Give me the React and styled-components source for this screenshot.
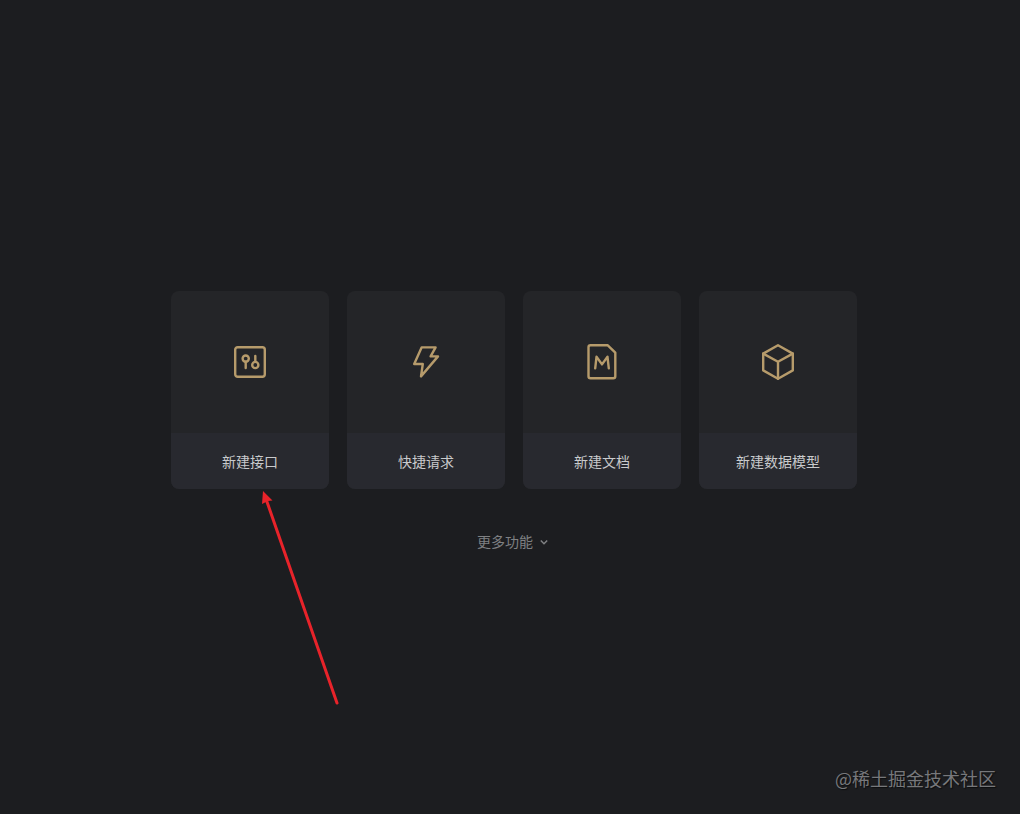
import styled, { createGlobalStyle } from "styled-components";

const GlobalStyle = createGlobalStyle`
  * {
    box-sizing: border-box;
  }

  body {
    margin: 0;
    background-color: #1c1d20;
    font-family: "Liberation Sans", "Noto Sans CJK SC", sans-serif;
  }
`;

const Page = styled.main`
  position: relative;
  display: flex;
  flex-direction: column;
  align-items: center;
  justify-content: center;
  min-height: 100vh;
  padding: 30px 16px 0 24px;
`;

const Cards = styled.div`
  display: flex;
  flex-wrap: wrap;
  justify-content: center;
  gap: 18px;
`;

const CardWrapper = styled.div`
  position: relative;
`;

const Card = styled.button`
  display: flex;
  flex-direction: column;
  width: 158px;
  padding: 0;
  border: none;
  border-radius: 8px;
  overflow: hidden;
  background-color: #242528;
  color: #c9cacc;
  font-family: inherit;
  font-size: 14px;
  line-height: 20px;
  cursor: pointer;
`;

const CardIcon = styled.span`
  display: flex;
  align-items: center;
  justify-content: center;
  width: 100%;
  height: 142px;
  color: #b69b6b;
`;

const CardTitle = styled.span`
  width: 100%;
  padding: 19px 0 17px;
  background-color: #28292f;
  text-align: center;
`;

const Icon = styled.svg`
  width: 40px;
  height: 40px;
  fill: none;
  stroke: currentColor;
  stroke-width: 2.4;
  stroke-linecap: round;
  stroke-linejoin: round;
`;

const More = styled.button`
  display: flex;
  align-items: center;
  gap: 7px;
  margin-top: 42px;
  padding: 0 3px 0 0;
  border: none;
  background: none;
  color: #7f8083;
  font-family: inherit;
  font-size: 14px;
  line-height: 22px;
  cursor: pointer;
`;

const Chevron = styled.svg`
  width: 8px;
  height: 8px;
  fill: none;
  stroke: currentColor;
  stroke-width: 1.5;
`;

//points at the first card
const Arrow = styled.svg`
  position: absolute;
  top: 100%;
  left: 89px;
  width: 80px;
  height: 218px;
  pointer-events: none;
`;

const Watermark = styled.span`
  position: absolute;
  right: 24px;
  bottom: 23px;
  color: #77787b;
  font-family: "Noto Sans CJK SC", sans-serif;
  font-size: 18px;
  line-height: 26px;
  text-shadow: 1px 1px 1px #0c0d0f;
`;

const ApiIcon = () => (
  <Icon viewBox="0 0 40 40" aria-hidden="true">
    <rect x="5.2" y="5.2" width="29.6" height="29.6" rx="2.5" />
    <circle cx="15.7" cy="16.6" r="3.1" />
    <path d="M15.7 19.7V26" />
    <circle cx="25.3" cy="23" r="3.1" />
    <path d="M25.3 19.9V14" />
  </Icon>
);

const BoltIcon = () => (
  <Icon viewBox="0 0 40 40" aria-hidden="true">
    <path d="M15.6 5.4H29.6L24.6 14.4H32L15 34.4L16.8 22H8.2Z" />
  </Icon>
);

const DocIcon = () => (
  <Icon viewBox="0 0 40 40" aria-hidden="true">
    <path d="M8.5 3.3H25.8L33.3 10.6V34.2Q33.3 36.2 31.3 36.2H8.5Q6.5 36.2 6.5 34.2V5.3Q6.5 3.3 8.5 3.3Z" />
    <path d="M13.2 26.4L14.5 14.8L20 22.4L25.5 14.8L26.8 26.4" />
  </Icon>
);

const CubeIcon = () => (
  <Icon viewBox="0 0 40 40" aria-hidden="true">
    <path d="M20 3.3L34.8 11.6V28.4L20 36.7L5.2 28.4V11.6Z" />
    <path d="M5.2 11.6L20 19.8L34.8 11.6M20 19.8V36.7" />
  </Icon>
);

const actions = [
  { id: 1, title: "新建接口", icon: ApiIcon, pointed: true },
  { id: 2, title: "快捷请求", icon: BoltIcon },
  { id: 3, title: "新建文档", icon: DocIcon },
  { id: 4, title: "新建数据模型", icon: CubeIcon },
];

const App = () => {
  return (
    <>
      <GlobalStyle />
      <Page>
        <Cards>
          {actions.map(({ id, title, icon: ActionIcon, pointed }) => (
            <CardWrapper key={id}>
              <Card type="button">
                <CardIcon>
                  <ActionIcon />
                </CardIcon>
                <CardTitle>{title}</CardTitle>
              </Card>
              {pointed && (
                <Arrow viewBox="0 0 80 218" aria-hidden="true">
                  <path
                    d="M6 10L77 214"
                    fill="none"
                    stroke="#e8232a"
                    strokeWidth="3"
                    strokeLinecap="round"
                  />
                  <path d="M3 2L12.5 11.5L8 12L2 15Z" fill="#e8232a" />
                </Arrow>
              )}
            </CardWrapper>
          ))}
        </Cards>
        <More type="button">
          更多功能
          <Chevron viewBox="0 0 8 8" aria-hidden="true">
            <path d="M0.8 2.5L4 5.7L7.2 2.5" />
          </Chevron>
        </More>
        <Watermark>@稀土掘金技术社区</Watermark>
      </Page>
    </>
  );
};

export default App;
